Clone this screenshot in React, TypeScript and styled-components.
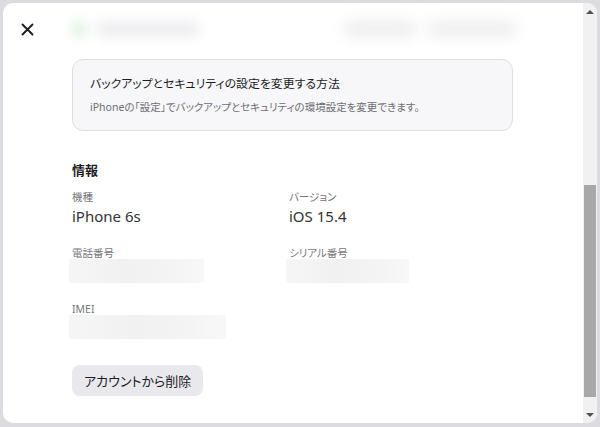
import React from 'react';
import styled, { createGlobalStyle } from 'styled-components';

const GlobalStyle = createGlobalStyle`
  html, body {
    margin: 0;
    padding: 0;
    background-color: #dcdce0;
  }
  body {
    font-family: "Noto Sans", "Noto Sans CJK JP", sans-serif;
    color: #1d1d1f;
    font-feature-settings: "palt";
  }
`;

// ======= Frame =======
const Page = styled.div`
  width: 600px;
  height: 427px;
  padding: 3px 3px 4px 3px;
  box-sizing: border-box;
`;

const Modal = styled.div`
  width: 594px;
  height: 420px;
  display: flex;
  background-color: #fff;
  border-radius: 10px;
  overflow: hidden;
`;

const Main = styled.div`
  flex: 1;
  display: flex;
  flex-direction: column;
  min-width: 0;
`;

// ======= Header (blurred content behind) =======
const Header = styled.div`
  height: 52px;
  display: flex;
  align-items: center;
  padding-left: 17px;
`;

const CloseButton = styled.button`
  width: 14px;
  height: 14px;
  padding: 0;
  border: none;
  background: none;
  display: flex;
  align-items: center;
  justify-content: center;
  cursor: pointer;
`;

const BlurGroup = styled.div`
  display: flex;
  align-items: center;
  gap: 8px;
  margin-left: 36px;
  filter: blur(6px);
`;

const BlurDot = styled.div<{ $color: string }>`
  width: 18px;
  height: 18px;
  border-radius: 50%;
  background-color: ${p => p.$color};
`;

const BlurBar = styled.div<{ $w: number }>`
  width: ${p => p.$w}px;
  height: 16px;
  border-radius: 8px;
  background-color: #eeeef0;
`;

const RightBlur = styled.div`
  margin-left: auto;
  margin-right: 66px;
  display: flex;
  gap: 10px;
  filter: blur(7px);
`;

// ======= Body =======
const Body = styled.div`
  padding: 4px 70px 0 69px;
`;

const Card = styled.div`
  background-color: #f7f7f9;
  border: 1px solid #dedee3;
  border-radius: 11px;
  padding: 13px 17px 15px 17px;
`;

const CardTitle = styled.div`
  font-size: 11.9px;
  line-height: 20px;
  font-weight: 400;
  color: #1d1d1f;
`;

const CardText = styled.div`
  margin-top: 6px;
  font-size: 10.5px;
  line-height: 16px;
  color: #6e6e73;
`;

const SectionTitle = styled.h3`
  margin: 29px 0 9px 0;
  font-size: 13px;
  line-height: 20px;
  font-weight: 700;
`;

const InfoGrid = styled.div`
  display: grid;
  grid-template-columns: 217px 1fr;
  row-gap: 18px;
`;

const Field = styled.div`
  display: flex;
  flex-direction: column;
`;

const Label = styled.div`
  font-size: 10.5px;
  line-height: 16px;
  color: #77777c;
`;

const Value = styled.div`
  font-size: 15px;
  line-height: 22px;
  color: #333336;
`;

const HiddenValue = styled.div<{ $w: number }>`
  width: ${p => p.$w}px;
  height: 24px;
  margin: -2px 0 0 -3px;
  background: linear-gradient(90deg, #f6f6f7 0%, #f1f1f2 40%, #f3f3f4 70%, #f8f8f9 100%);
`;

const DeleteButton = styled.button`
  margin-top: 26px;
  height: 31px;
  padding: 0 12px;
  border: none;
  border-radius: 8px;
  background-color: #e8e8ed;
  color: #1d1d1f;
  font-family: inherit;
  font-feature-settings: "palt";
  font-size: 13px;
  cursor: pointer;
`;

// ======= Scrollbar =======
const Scrollbar = styled.div`
  width: 14px;
  display: flex;
  flex-direction: column;
  align-items: center;
  background-color: #f1f1f1;
`;

const Arrow = styled.div<{ $down?: boolean }>`
  height: 17px;
  width: 100%;
  display: flex;
  align-items: center;
  justify-content: center;

  &::after {
    content: '';
    width: 0;
    height: 0;
    border-left: 4px solid transparent;
    border-right: 4px solid transparent;
    ${p => (p.$down ? 'border-top: 4px solid #505050;' : 'border-bottom: 4px solid #505050;')}
  }
`;

const Track = styled.div`
  flex: 1;
  width: 100%;
  display: flex;
  flex-direction: column;
  padding: 165px 0 9px 0;
  box-sizing: border-box;
`;

const Thumb = styled.div`
  flex: 1;
  margin: 0 1px;
  background-color: #a8a8a8;
`;

const CloseIcon = () => (
  <svg width="13" height="13" viewBox="0 0 13 13">
    <path d="M1.5 1.5 L11.5 11.5 M11.5 1.5 L1.5 11.5" stroke="#1d1d1f" strokeWidth="1.9" strokeLinecap="round" />
  </svg>
);

const App: React.FC = () => {
  return (
    <Page>
      <GlobalStyle />
      <Modal>
        <Main>
          <Header>
            <CloseButton aria-label="閉じる">
              <CloseIcon />
            </CloseButton>
            <BlurGroup>
              <BlurDot $color="#e4f3e4" />
              <BlurBar $w={104} />
            </BlurGroup>
            <RightBlur>
              <BlurBar $w={74} />
              <BlurBar $w={90} />
            </RightBlur>
          </Header>

          <Body>
            <Card>
              <CardTitle>バックアップとセキュリティの設定を変更する方法</CardTitle>
              <CardText>iPhoneの「設定」でバックアップとセキュリティの環境設定を変更できます。</CardText>
            </Card>

            <SectionTitle>情報</SectionTitle>
            <InfoGrid>
              <Field>
                <Label>機種</Label>
                <Value>iPhone 6s</Value>
              </Field>
              <Field>
                <Label>バージョン</Label>
                <Value>iOS 15.4</Value>
              </Field>
              <Field>
                <Label>電話番号</Label>
                <HiddenValue $w={135} />
              </Field>
              <Field>
                <Label>シリアル番号</Label>
                <HiddenValue $w={123} />
              </Field>
              <Field>
                <Label>IMEI</Label>
                <HiddenValue $w={157} />
              </Field>
            </InfoGrid>

            <DeleteButton>アカウントから削除</DeleteButton>
          </Body>
        </Main>

        <Scrollbar>
          <Arrow />
          <Track>
            <Thumb />
          </Track>
          <Arrow $down />
        </Scrollbar>
      </Modal>
    </Page>
  );
};

export default App;
